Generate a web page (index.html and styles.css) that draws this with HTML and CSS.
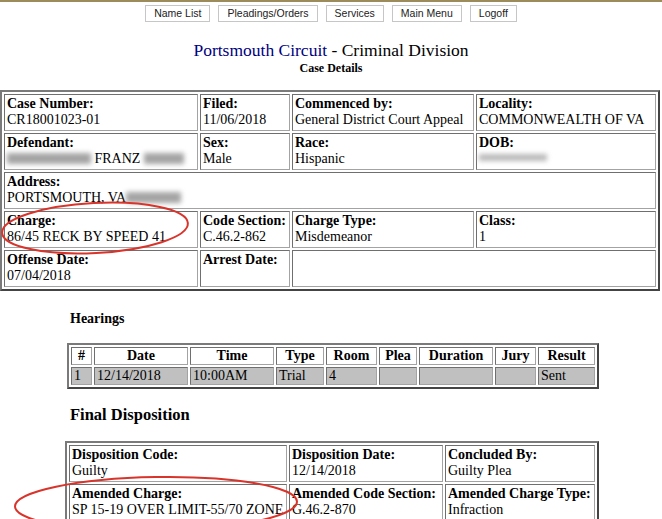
FILE: index.html
```html
<!DOCTYPE html>
<html lang="en">
<head>
<meta charset="utf-8">
<title>Case Details</title>
<link rel="stylesheet" href="styles.css">
</head>
<body>
<div class="topline"></div>
<nav class="menu">
  <button class="btn">Name List</button>
  <button class="btn">Pleadings/Orders</button>
  <button class="btn">Services</button>
  <button class="btn">Main Menu</button>
  <button class="btn">Logoff</button>
</nav>
<h1 class="title"><span class="court">Portsmouth Circuit</span> - Criminal Division</h1>
<div class="subtitle">Case Details</div>

<table class="grid case">
  <colgroup><col class="cc1"><col class="cc2"><col class="cc3"><col class="cc4"></colgroup>
  <tr>
    <td><b>Case Number:</b><br>CR18001023-01</td>
    <td><b>Filed:</b><br>11/06/2018</td>
    <td><b>Commenced by:</b><br>General District Court Appeal</td>
    <td><b>Locality:</b><br>COMMONWEALTH OF VA</td>
  </tr>
  <tr>
    <td><b>Defendant:</b><br><span class="redact r-first"></span> FRANZ <span class="redact r-last"></span></td>
    <td><b>Sex:</b><br>Male</td>
    <td><b>Race:</b><br>Hispanic</td>
    <td><b>DOB:</b><br><span class="redact r-dob"></span></td>
  </tr>
  <tr>
    <td colspan="4"><b>Address:</b><br>PORTSMOUTH, VA<span class="redact r-zip"></span></td>
  </tr>
  <tr>
    <td><b>Charge:</b><br>86/45 RECK BY SPEED 41</td>
    <td><b>Code Section:</b><br>C.46.2-862</td>
    <td><b>Charge Type:</b><br>Misdemeanor</td>
    <td><b>Class:</b><br>1</td>
  </tr>
  <tr>
    <td><b>Offense Date:</b><br>07/04/2018</td>
    <td><b>Arrest Date:</b></td>
    <td colspan="2"></td>
  </tr>
</table>

<h2 class="section hearings-title">Hearings</h2>
<table class="grid hear">
  <colgroup>
    <col class="h1"><col class="h2"><col class="h3"><col class="h4"><col class="h5">
    <col class="h6"><col class="h7"><col class="h8"><col class="h9">
  </colgroup>
  <tr class="head">
    <th>#</th><th>Date</th><th>Time</th><th>Type</th><th>Room</th><th>Plea</th><th>Duration</th><th>Jury</th><th>Result</th>
  </tr>
  <tr class="data">
    <td>1</td><td>12/14/2018</td><td>10:00AM</td><td>Trial</td><td>4</td><td></td><td></td><td></td><td>Sent</td>
  </tr>
</table>

<h2 class="section final-title">Final Disposition</h2>
<table class="grid disp">
  <colgroup><col class="d1"><col class="d2"><col class="d3"></colgroup>
  <tr>
    <td><b>Disposition Code:</b><br>Guilty</td>
    <td><b>Disposition Date:</b><br>12/14/2018</td>
    <td><b>Concluded By:</b><br>Guilty Plea</td>
  </tr>
  <tr>
    <td><b>Amended Charge:</b><br>SP 15-19 OVER LIMIT-55/70 ZONE</td>
    <td><b>Amended Code Section:</b><br>G.46.2-870</td>
    <td><b>Amended Charge Type:</b><br>Infraction</td>
  </tr>
</table>

<svg class="annot" width="662" height="519" viewBox="0 0 662 519" aria-hidden="true">
  <ellipse cx="95" cy="228" rx="93" ry="25" transform="rotate(-3 95 228)" fill="none" stroke="#d9342b" stroke-width="2"/>
  <ellipse cx="156" cy="504" rx="141" ry="27" transform="rotate(-1 156 504)" fill="none" stroke="#d9342b" stroke-width="2"/>
</svg>
</body>
</html>
```
FILE: styles.css
```css
html, body {
  margin: 0;
  padding: 0;
  background: #fff;
}
body {
  position: relative;
  width: 662px;
  height: 519px;
  overflow: hidden;
  font-family: "Liberation Serif", "Times New Roman", serif;
  font-size: 14px;
  color: #000;
}
.topline {
  height: 2px;
  background: #9c8b5b;
}
.menu {
  display: flex;
  justify-content: center;
  gap: 8px;
  margin-top: 3px;
}
.btn {
  font-family: "Liberation Sans", Arial, sans-serif;
  font-size: 10.5px;
  height: 17px;
  padding: 0 8px;
  border: 1px solid #c6c6c6;
  background: #fff;
  color: #222;
  line-height: 15px;
}
.title {
  margin: 18px 0 0;
  font-size: 17.5px;
  font-weight: normal;
  line-height: 20px;
  text-align: center;
}
.court {
  color: #000080;
}
.subtitle {
  margin-top: 1px;
  font-size: 12px;
  font-weight: bold;
  line-height: 14px;
  text-align: center;
}
.grid {
  table-layout: fixed;
  border-collapse: separate;
  border-spacing: 2px;
  border-style: solid;
  border-width: 2px;
  border-color: #7a7a7a #444 #444 #7a7a7a;
}
.grid td, .grid th {
  border: 1px solid;
  border-color: #6f6f6f #a3a3a3 #a3a3a3 #6f6f6f;
  padding: 1px 2px 2px;
  vertical-align: top;
  line-height: 16px;
  text-align: left;
  background: #fff;
  white-space: nowrap;
}
.case {
  width: 660px;
  margin: 15px 0 0 0;
}
.cc1 { width: 194px; }
.cc2 { width: 90px; }
.cc3 { width: 182px; }
.cc4 { width: 180px; }

.redact {
  display: inline-block;
  height: 11px;
  background: #a4a4a4;
  filter: blur(2.5px);
  vertical-align: -1px;
}
.r-first { width: 84px; }
.r-last { width: 40px; }
.r-zip { width: 55px; }
.r-dob { width: 68px; height: 7px; background: #b9b9b9; vertical-align: 2px; }

.section {
  margin: 0;
  padding-left: 70px;
  font-weight: bold;
}
.hearings-title {
  margin-top: 20px;
  font-size: 14px;
  line-height: 16px;
}
.hear {
  margin: 16px 0 0 67px;
  width: 528px;
}
.hear th, .hear td {
  padding: 0 2px;
}
.hear th {
  text-align: center;
}
.hear .data td {
  background: #c0c0c0;
}
.h1 { width: 21px; }
.h2 { width: 94px; }
.h3 { width: 84px; }
.h4 { width: 48px; }
.h5 { width: 51px; }
.h6 { width: 38px; }
.h7 { width: 74px; }
.h8 { width: 41px; }
.h9 { width: 57px; }

.final-title {
  margin-top: 17px;
  font-size: 16.5px;
  line-height: 18px;
}
.disp {
  margin: 17px 0 0 65px;
  width: 534px;
}
.d1 { width: 218px; }
.d2 { width: 154px; }
.d3 { width: 150px; }

.annot {
  position: absolute;
  left: 0;
  top: 0;
  pointer-events: none;
}
```
